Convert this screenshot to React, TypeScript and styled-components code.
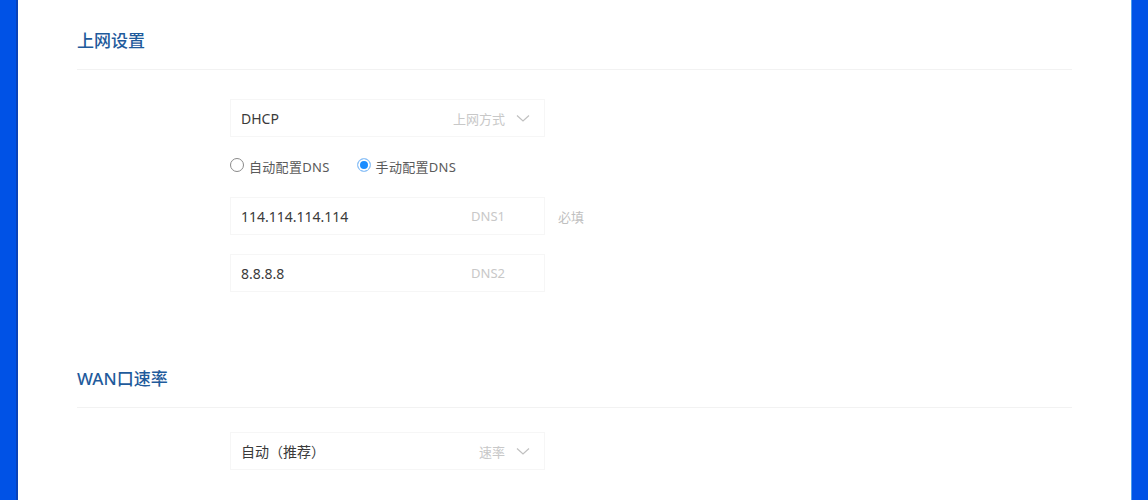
import { FunctionComponent, ReactElement } from 'react'
import styled, { createGlobalStyle } from 'styled-components'

const GlobalStyle = createGlobalStyle`
  html, body {
    margin: 0;
    padding: 0;
    background: #0052e6;
  }
  body {
    font-family: "Noto Sans", "Noto Sans CJK SC", sans-serif;
  }
`

const Frame = styled.div`
  display: flex;
  height: 500px;
  background: #0052e6;
  overflow: hidden;
`

const Edge = styled.div<{ $side: 'left' | 'right' }>`
  width: ${props => (props.$side === 'left' ? '18px' : '17px')};
  flex-shrink: 0;
  background: #0052e6;
  box-shadow: ${props => (props.$side === 'left' ? 'inset -2px 0 0 #0a43b8' : 'inset 1px 0 0 #4a9cf0')};
`

const Panel = styled.main`
  flex: 1;
  background: #ffffff;
  padding: 0 59px;
`

const Section = styled.section<{ $gap: number }>`
  padding-top: ${props => props.$gap}px;
`

const SectionHeader = styled.h2`
  margin: 0;
  padding: 29px 0 16px;
  font-size: 17px;
  line-height: 24px;
  font-weight: 500;
  color: #1f5b9c;
  border-bottom: 1px solid #f2f2f2;
`

const FormBody = styled.div<{ $top: number }>`
  display: flex;
  flex-direction: column;
  padding: ${props => props.$top}px 0 0 153px;
`

const FieldRow = styled.div<{ $below: number }>`
  display: flex;
  align-items: center;
  gap: 13px;
  margin-bottom: ${props => props.$below}px;
`

const Field = styled.div`
  width: 315px;
  height: 38px;
  box-sizing: border-box;
  display: flex;
  align-items: center;
  padding: 0 13px 0 10px;
  border: 1px solid #f6f6f6;
  background: #ffffff;
`

const Value = styled.span`
  flex: 1;
  font-size: 14px;
  color: #3a3a3a;
`

const FieldLabel = styled.span<{ $pad: number }>`
  font-size: 13px;
  color: #c8c8c8;
  padding-right: ${props => props.$pad}px;
`

const Chevron = styled.svg`
  width: 16px;
  height: 10px;
  margin-left: 10px;
`

const Hint = styled.span`
  font-size: 13px;
  color: #c0c0c0;
`

const RadioGroup = styled.div`
  display: flex;
  align-items: center;
  gap: 27px;
  height: 24px;
  margin-bottom: 19px;
`

const RadioItem = styled.label`
  display: flex;
  align-items: center;
  gap: 5px;
  font-size: 13px;
  letter-spacing: 0.3px;
  color: #5a5a5a;
`

const RadioDot = styled.span<{ $checked: boolean }>`
  width: 14px;
  height: 14px;
  box-sizing: border-box;
  border-radius: 50%;
  border: 1px solid ${props => (props.$checked ? '#9cc8f5' : '#8a8a8a')};
  background: ${props => (props.$checked ? '#1a8cff' : '#fff')};
  box-shadow: ${props => (props.$checked ? 'inset 0 0 0 2px #fff' : 'none')};
  margin-top: -2px;
`

const ChevronIcon = () => (
  <Chevron viewBox="0 0 16 10">
    <path d="M2 2.5 L8 8 L14 2.5" fill="none" stroke="#c0c0c0" strokeWidth="1.2" />
  </Chevron>
)

const App: FunctionComponent = (): ReactElement => (
  <>
    <GlobalStyle />
    <Frame>
      <Edge $side="left" />
      <Panel>
        <Section $gap={0}>
          <SectionHeader>上网设置</SectionHeader>
          <FormBody $top={29}>
            <FieldRow $below={17}>
              <Field>
                <Value>DHCP</Value>
                <FieldLabel $pad={0}>上网方式</FieldLabel>
                <ChevronIcon />
              </Field>
            </FieldRow>
            <RadioGroup>
              <RadioItem><RadioDot $checked={false} />自动配置DNS</RadioItem>
              <RadioItem><RadioDot $checked={true} />手动配置DNS</RadioItem>
            </RadioGroup>
            <FieldRow $below={19}>
              <Field>
                <Value>114.114.114.114</Value>
                <FieldLabel $pad={26}>DNS1</FieldLabel>
              </Field>
              <Hint>必填</Hint>
            </FieldRow>
            <FieldRow $below={0}>
              <Field>
                <Value>8.8.8.8</Value>
                <FieldLabel $pad={26}>DNS2</FieldLabel>
              </Field>
            </FieldRow>
          </FormBody>
        </Section>
        <Section $gap={46}>
          <SectionHeader>WAN口速率</SectionHeader>
          <FormBody $top={24}>
            <FieldRow $below={0}>
              <Field>
                <Value>自动（推荐）</Value>
                <FieldLabel $pad={0}>速率</FieldLabel>
                <ChevronIcon />
              </Field>
            </FieldRow>
          </FormBody>
        </Section>
      </Panel>
      <Edge $side="right" />
    </Frame>
  </>
)

export default App
